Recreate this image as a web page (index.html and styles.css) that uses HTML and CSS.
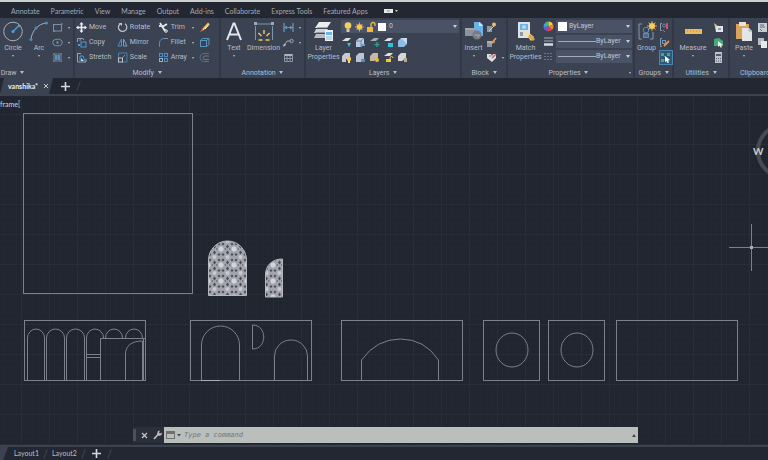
FILE: index.html
```html
<!DOCTYPE html>
<html lang="en">
<head>
<meta charset="UTF-8">
<meta name="viewport" content="width=device-width, initial-scale=1.0">
<title>vanshika - drawing</title>
<link rel="stylesheet" href="styles.css">
</head>
<body>

<nav class="menu">
    <a href="#">Annotate</a>
    <a href="#">Parametric</a>
    <a href="#">View</a>
    <a href="#">Manage</a>
    <a href="#">Output</a>
    <a href="#">Add-ins</a>
    <a href="#">Collaborate</a>
    <a href="#">Express Tools</a>
    <a href="#">Featured Apps</a>
    <button class="menu-toggle" aria-label="Ribbon display"><svg width="16" height="6" viewBox="0 0 16 6"><rect x="1" y="1" width="9" height="4" fill="#e4e6e8"/><path d="M4 3h3" stroke="#8a9099"/><path d="M12 2h3l-1.500 2z" fill="#c5c9d0"/></svg></button>
</nav>

<div class="ribbon">

    <!-- Draw -->
    <section class="panel draw">
        <div class="panel-body">
            <button class="big"><svg width="20" height="21" viewBox="0 0 20 21" fill="none"><circle cx="10" cy="10.500" r="9.300" stroke="#a7adb8"/><path d="M10 10.500l5-5" stroke="#4ba3e0" stroke-width="1.300"/><circle cx="10" cy="10.500" r="1.500" fill="#4ba3e0"/><circle cx="16" cy="5" r="1.300" fill="#4ba3e0"/></svg><span>Circle</span><i class="arrow"></i></button>
            <button class="big"><svg width="20" height="21" viewBox="0 0 20 21" fill="none"><path d="M2 18C3 10 9 3 17 2" stroke="#a7adb8"/><g fill="#4b8fc4"><circle cx="2" cy="18.500" r="1.500"/><circle cx="7" cy="7" r="1.500"/><circle cx="17.500" cy="2" r="1.500"/></g></svg><span>Arc</span><i class="arrow"></i></button>
            <div class="stack">
                <button class="tool" aria-label="Rectangle"><svg width="11" height="11" viewBox="0 0 11 11" fill="none"><rect x="1.500" y="2.500" width="8" height="6.500" stroke="#8790a0"/><path d="M1 9h2M9 2h1.500" stroke="#4b8fc4" stroke-width="2"/></svg><i class="arrow"></i></button>
                <button class="tool" aria-label="Ellipse"><svg width="11" height="11" viewBox="0 0 11 11" fill="none"><ellipse cx="5.500" cy="5.500" rx="4.700" ry="3.300" stroke="#8790a0"/><circle cx="5.500" cy="5.500" r="1.300" fill="#4b8fc4"/></svg><i class="arrow"></i></button>
                <button class="tool" aria-label="Hatch"><svg width="11" height="11" viewBox="0 0 11 11" fill="none"><path d="M2 1v9M9 1v9M1 2h9M1 9h9" stroke="#75839a"/><rect x="3" y="3" width="5" height="5" fill="#3f7aa8"/><path d="M4 3v5M7 3v5" stroke="#65a8d8"/></svg><i class="arrow"></i></button>
            </div>
        </div>
        <h2 class="panel-title">Draw <i class="arrow down"></i></h2>
    </section>

    <!-- Modify -->
    <section class="panel modify">
        <div class="panel-body">
            <div class="stack wide">
                <button class="tool"><svg width="11" height="11" viewBox="0 0 11 11"><path d="M5.500 1v9M1 5.500h9" stroke="#e8eaee" stroke-width="1.600"/><path d="M5.500 0l2 2.500h-4zM5.500 11l2-2.500h-4zM0 5.500l2.500-2v4zM11 5.500l-2.500-2v4z" fill="#e8eaee"/></svg>Move</button>
                <button class="tool"><svg width="11" height="11" viewBox="0 0 11 11" fill="none"><path d="M1.500 5V1.500H6M8 3a2 2 0 1 0-4 1" stroke="#8fa1b5"/><rect x="5" y="5" width="5" height="5" stroke="#4b9bd4"/><path d="M2 8h2" stroke="#4b9bd4" stroke-width="2"/></svg>Copy</button>
                <button class="tool"><svg width="11" height="11" viewBox="0 0 11 11" fill="none"><path d="M1.500 1v9H10V7M1.500 1.500H5" stroke="#97a3b4"/><path d="M4 9V4h3l2 5" stroke="#4b9bd4"/><path d="M5 6l3 3H5z" fill="#d5d9df"/></svg>Stretch</button>
            </div>
            <div class="stack wide">
                <button class="tool"><svg width="11" height="11" viewBox="0 0 11 11" fill="none"><path d="M8 1.800A4.200 4.200 0 1 1 3 2" stroke="#c3c8d0" stroke-width="1.200"/><path d="M1.500 1h3.500v3z" fill="#c3c8d0"/></svg>Rotate</button>
                <button class="tool"><svg width="11" height="11" viewBox="0 0 11 11" fill="none"><path d="M4.500 2v7H1z" stroke="#4b8fc4"/><path d="M6.500 2v7H10z" stroke="#6fa0c8"/></svg>Mirror</button>
                <button class="tool"><svg width="11" height="11" viewBox="0 0 11 11" fill="none"><path d="M1.500 5V1h8.500v9H6" stroke="#4b7ea8"/><rect x="1.500" y="6" width="4" height="4" stroke="#c3c8d0"/><path d="M6 5l2-2" stroke="#4b9bd4"/></svg>Scale</button>
            </div>
            <div class="stack wide">
                <button class="tool"><svg width="11" height="11" viewBox="0 0 11 11" fill="none"><path d="M2 1l5 8M9 2L4 5" stroke="#e8eaee" stroke-width="1.800"/><circle cx="8" cy="9" r="1.300" stroke="#e8eaee"/><path d="M1 4h3" stroke="#d9dce0" stroke-width="2"/></svg>Trim<i class="arrow"></i></button>
                <button class="tool"><svg width="11" height="11" viewBox="0 0 11 11" fill="none"><path d="M1.500 10V6c0-3 2-4.500 5-4.500" stroke="#4b8fc4"/><path d="M6 1.500h4" stroke="#8790a0"/></svg>Fillet<i class="arrow"></i></button>
                <button class="tool"><svg width="11" height="11" viewBox="0 0 11 11" fill="none"><g stroke="#4b8fc4"><rect x="1.500" y="1.500" width="3" height="3"/><rect x="6.500" y="1.500" width="3" height="3"/><rect x="6.500" y="6.500" width="3" height="3"/></g><rect x="1.500" y="6.500" width="3" height="3" stroke="#a7adb8"/></svg>Array<i class="arrow"></i></button>
            </div>
            <div class="stack">
                <button class="tool" aria-label="Erase"><svg width="11" height="11" viewBox="0 0 11 11"><path d="M3 7l6-6.500 1.500 1.500-6 6.500z" fill="#f2c14e"/><path d="M1 10l2-3 1.500 1.500z" fill="#e8604c"/><path d="M6 7l4-4.500" stroke="#fff"/></svg></button>
                <button class="tool" aria-label="Explode"><svg width="11" height="11" viewBox="0 0 11 11" fill="none" stroke="#5b93be"><rect x="1.500" y="3.500" width="6" height="6"/><path d="M1.500 3.500l2-2h6.500v6l-2.500 2M7.500 3.500L10 1.500"/></svg></button>
                <button class="tool" aria-label="Offset"><svg width="11" height="11" viewBox="0 0 11 11" fill="none"><path d="M10 1.500H5a4 4 0 0 0 0 8h5" stroke="#4a7495"/><path d="M10 4H6a1.500 1.500 0 0 0 0 3.500h4" stroke="#717b8d"/></svg></button>
            </div>
        </div>
        <h2 class="panel-title">Modify <i class="arrow down"></i></h2>
    </section>

    <!-- Annotation -->
    <section class="panel annotation">
        <div class="panel-body">
            <button class="big"><svg width="20" height="21" viewBox="0 0 20 21" fill="none"><path d="M3 19L9.500 2.500h1L17 19M5.500 13.500h9" stroke="#e4e6ea" stroke-width="2"/></svg><span>Text</span><i class="arrow"></i></button>
            <button class="big dim"><svg width="20" height="21" viewBox="0 0 20 21" fill="none"><path d="M1.500 5v14M18.500 5v14M1 3h18" stroke="#7e96b0"/><path d="M0 1h3v3H0zM17 1h3v3h-3z" fill="#9da8b7"/><path d="M4.500 19h4M11.500 19h4M4.500 12l3 3M15.500 12l-3 3M10 9v4" stroke="#f0c65a" stroke-width="1.500"/></svg><span>Dimension</span></button>
            <div class="stack">
                <button class="tool" aria-label="Linear"><svg width="11" height="11" viewBox="0 0 11 11"><path d="M1 1v9M10 1v9" stroke="#9aa3b1"/><path d="M1 5.500h9" stroke="#4b9bd4"/><path d="M1 5.500l3-2v4zM10 5.500l-3-2v4z" fill="#4b9bd4"/></svg><i class="arrow"></i></button>
                <button class="tool" aria-label="Leader"><svg width="11" height="11" viewBox="0 0 11 11" fill="none"><path d="M1 9l3-5h4" stroke="#9aa3b1"/><circle cx="8.500" cy="4" r="1.700" stroke="#9aa3b1"/><path d="M0 10l1-3.500 2 1.500z" fill="#c3c8d0"/></svg><i class="arrow"></i></button>
                <button class="tool" aria-label="Table"><svg width="11" height="11" viewBox="0 0 11 11" fill="none"><path d="M1 2h9v2H1z" fill="#aeb4be"/><path d="M1.500 2v7.500h8V2M1 6.500h9M4 4v5M7 4v5" stroke="#8b94a2"/></svg></button>
            </div>
        </div>
        <h2 class="panel-title">Annotation <i class="arrow down"></i></h2>
    </section>

    <!-- Layers -->
    <section class="panel layers">
        <div class="panel-body">
            <button class="big"><svg width="20" height="21" viewBox="0 0 20 21"><path d="M5 1h12l-4 6H1z" fill="#eceded"/><path d="M2 8h12l-2 4H0z" fill="#d0d2d4"/><path d="M2 13h10l-1 4H0z" fill="#b8bbbf"/><path d="M3 7h10M2 12h10" stroke="#596171"/><path d="M11 9h8v11h-8z" fill="#eef1f3"/><path d="M12 11h6v3h-6z" fill="#69b7ea"/><path d="M12 16h6M12 18h6" stroke="#8bbbdc"/></svg><span>Layer</span><span>Properties</span></button>
            <div class="layer-tools">
                <div class="combo">
                    <svg width="44" height="12" viewBox="0 0 44 12"><circle cx="5" cy="4.500" r="3.300" fill="#f7cf58"/><path d="M3.500 7.500h3V11h-3z" fill="#d8c9a0"/><circle cx="16.500" cy="6" r="2.800" fill="#f7c94a"/><path d="M16.500 1.500v9M12 6h9M13.500 3l6 6M19.500 3l-6 6" stroke="#f7c94a" stroke-width=".8"/><path d="M24 6h6v5h-6z" fill="#f2b93c"/><path d="M28 6V3.500a2 2 0 0 1 4 0V5" fill="none" stroke="#f2b93c" stroke-width="1.300"/><path d="M35 2h8v8h-8z" fill="#fff"/></svg>
                    <select aria-label="Layer"><option>0</option></select>
                </div>
                <div class="icon-row">
                    <button class="tool" aria-label="Off"><svg width="11" height="11" viewBox="0 0 11 11"><path d="M1 4l4-3h5L7 4z" fill="#dfe2e5"/><path d="M6 6h4L8 10z" fill="#2cc4d4"/></svg></button>
                    <button class="tool" aria-label="Isolate"><svg width="11" height="11" viewBox="0 0 11 11"><path d="M1 4l3-3h5v7l-3 2H1z" fill="#b9cbdc"/><path d="M1 4h5v6M6 4l3-3" fill="none" stroke="#6a86a4"/><path d="M6 7h4v2H6z" fill="#5ca4dc"/></svg></button>
                    <button class="tool" aria-label="Freeze"><svg width="11" height="11" viewBox="0 0 11 11"><path d="M1 4l4-3h5L7 4z" fill="#a6adb6"/><path d="M8 5v5M5.500 7.500h5" stroke="#2a9c98" stroke-width="1.500"/></svg></button>
                    <button class="tool" aria-label="Lock"><svg width="11" height="11" viewBox="0 0 11 11"><path d="M1 4l4-3h5L7 4z" fill="#dfe2e5"/><path d="M5 6h5v4H5z" fill="#2cc4d4"/></svg></button>
                    <button class="tool" aria-label="Make current"><svg width="11" height="11" viewBox="0 0 11 11"><path d="M1 4l3-3h6v6l-3 3H1z" fill="#8ebce4"/><path d="M4 1h6v6" fill="#c5dcef"/></svg></button>
                </div>
                <div class="icon-row">
                    <button class="tool" aria-label="Turn on"><svg width="11" height="11" viewBox="0 0 11 11"><path d="M1 4l3-3h5v6H5v3H1z" fill="#c7cbd1"/><circle cx="8" cy="7" r="2.200" fill="#f7c94a"/><path d="M7 9h2v2H7z" fill="#e8d9a8"/></svg></button>
                    <button class="tool" aria-label="Unisolate"><svg width="11" height="11" viewBox="0 0 11 11"><path d="M1 4l3-3h5v6l-3 3H1z" fill="#b9c5d2"/><path d="M6 7h4v3H7z" fill="#4f88bd"/></svg></button>
                    <button class="tool" aria-label="Thaw"><svg width="11" height="11" viewBox="0 0 11 11"><path d="M1 4l3-3h5v5L5 9H1z" fill="#c4b8a6"/><circle cx="8" cy="8" r="2" fill="#f7b93a"/></svg></button>
                    <button class="tool" aria-label="Unlock"><svg width="11" height="11" viewBox="0 0 11 11"><path d="M1 4l4-3h5L7 4z" fill="#dfe2e5"/><path d="M3 7h5v3H3z" fill="#f2c83c"/><path d="M7 7V6a1.500 1.500 0 0 1 3 0" fill="none" stroke="#f2c83c"/></svg></button>
                    <button class="tool" aria-label="Match layer"><svg width="11" height="11" viewBox="0 0 11 11"><path d="M1 4l3-3h5v5L5 9H1z" fill="#d5d7da"/><path d="M7 6h3v4H7z" fill="#b9a98a"/></svg></button>
                </div>
            </div>
        </div>
        <h2 class="panel-title">Layers <i class="arrow down"></i></h2>
    </section>

    <!-- Block -->
    <section class="panel block">
        <div class="panel-body">
            <button class="big"><svg width="20" height="21" viewBox="0 0 20 21"><path d="M10 1h6l3 3v11h-9z" fill="#6ab2ea"/><path d="M15 1l4 4h-4z" fill="#d4e8f7"/><path d="M1 7h11v8H1z" fill="#8d939d"/><path d="M1 8h11" stroke="#b3b8bf"/><circle cx="13" cy="14" r="4.500" fill="#757c88"/><path d="M10.500 14h5l-2 2.500" stroke="#aab0b9" fill="none"/></svg><span>Insert</span><i class="arrow"></i></button>
            <div class="stack">
                <button class="tool" aria-label="Create block"><svg width="11" height="11" viewBox="0 0 11 11"><path d="M1 4h5v6H1z" fill="#8d95a2"/><path d="M3 9l5-5" stroke="#cdd1d6"/><circle cx="8" cy="2.500" r="2" fill="#f0c060"/></svg></button>
                <button class="tool" aria-label="Edit block"><svg width="11" height="11" viewBox="0 0 11 11"><path d="M1 4h5v6H1z" fill="#8d95a2"/><path d="M1 5h8" stroke="#cdd1d6"/><path d="M5 7l5-6" stroke="#ef9a54" stroke-width="1.800"/></svg></button>
                <button class="tool" aria-label="Edit attributes"><svg width="11" height="11" viewBox="0 0 11 11"><path d="M1 2h4l1 2 1-2h3v4L6 10 1 6z" fill="#dddfe2"/><path d="M6 6l4-4" stroke="#d3604f" stroke-width="1.500"/><path d="M3 4h2" stroke="#70798a"/></svg><i class="arrow"></i></button>
            </div>
        </div>
        <h2 class="panel-title">Block <i class="arrow down"></i></h2>
    </section>

    <!-- Properties -->
    <section class="panel properties">
        <div class="panel-body">
            <button class="big"><svg width="20" height="21" viewBox="0 0 20 21"><path d="M2 1h12v16H2z" fill="#dfe2e5"/><path d="M4 3h8v6H4z" fill="#6cb4e8"/><circle cx="8" cy="6" r="2" fill="#b9d8ef"/><path d="M4 11h3v4H4z" fill="#8e98a8"/><path d="M8 11l3-1 7 6-3 4z" fill="#f0dfb2"/><path d="M14 13l5 5-2 2-5-4z" fill="#dca648"/></svg><span>Match</span><span>Properties</span></button>
            <div class="prop-rows">
                <div class="prop-row">
                    <svg width="11" height="11" viewBox="0 0 11 11"><path d="M5.500 5.500V.5a5 5 0 0 1 4.500 3z" fill="#f5d33d"/><path d="M5.500 5.500L10 3.500a5 5 0 0 1-1 5.500z" fill="#ee7f35"/><path d="M5.500 5.500L9 9a5 5 0 0 1-5 1z" fill="#dd4058"/><path d="M5.500 5.500L4 10.200A5 5 0 0 1 .5 6z" fill="#7a56c8"/><path d="M5.500 5.500L.5 6A5 5 0 0 1 2.500 1.500z" fill="#3fa5e0"/><path d="M5.500 5.500l-3-4a5 5 0 0 1 3-1z" fill="#5cc06a"/></svg>
                    <div class="combo"><span class="swatch"></span><select aria-label="Object color"><option>ByLayer</option></select></div>
                </div>
                <div class="prop-row">
                    <svg width="11" height="11" viewBox="0 0 11 11"><path d="M1 2h9M1 5h9" stroke="#a9afb9"/><path d="M1 8.500h9" stroke="#d9dce0" stroke-width="2.500"/></svg>
                    <div class="combo"><span class="line"></span><select aria-label="Lineweight"><option>ByLayer</option></select></div>
                </div>
                <div class="prop-row">
                    <svg width="11" height="11" viewBox="0 0 11 11"><path d="M1 2.500h9M1 5.500h9M1 8.500h9" stroke="#6a7485" stroke-dasharray="2 1"/></svg>
                    <div class="combo"><span class="line"></span><select aria-label="Linetype"><option>ByLayer</option></select></div>
                </div>
            </div>
        </div>
        <h2 class="panel-title with-launcher"><span>Properties <i class="arrow down"></i></span><i class="arrow launcher"></i></h2>
    </section>

    <!-- Groups -->
    <section class="panel groups">
        <div class="panel-body">
            <button class="big"><svg width="20" height="21" viewBox="0 0 20 21" fill="none"><path d="M5 3H2v15h3M13 18h3v-7" stroke="#8e98a8"/><circle cx="9" cy="9" r="2.800" stroke="#5d8cb8"/><rect x="6.500" y="12.500" width="5" height="4" fill="#52698a" stroke="#5d8cb8"/><circle cx="15" cy="5" r="3" fill="#f8cc5a"/><path d="M15 0v10M10 5h10M11.500 1.500l7 7M18.500 1.500l-7 7" stroke="#f8cc5a" stroke-width=".8"/></svg><span>Group</span></button>
            <div class="stack">
                <button class="tool" aria-label="Ungroup"><svg width="11" height="11" viewBox="0 0 11 11" fill="none"><path d="M3 1.500H1.500v7H3" stroke="#8e98a8"/><circle cx="5" cy="3.500" r="1.500" stroke="#5d8cb8"/><path d="M8 1v6" stroke="#d3525c" stroke-width="2"/><path d="M4 8l2 2" stroke="#5d8cb8"/></svg></button>
                <button class="tool" aria-label="Group edit"><svg width="11" height="11" viewBox="0 0 11 11" fill="none"><path d="M3 1.500H1.500v8H3" stroke="#8e98a8"/><rect x="3.500" y="3.500" width="3" height="3" stroke="#5b9bd6"/><path d="M5 9l5-5" stroke="#e29355" stroke-width="1.800"/></svg></button>
                <button class="tool selected" aria-label="Group selection on/off" aria-pressed="true"><svg width="11" height="11" viewBox="0 0 11 11"><path d="M1 1h3v3H1zM1 7h3v3H1zM7 1h3v3H7z" fill="#4ca58a"/><path d="M2 2l5 5" stroke="#4ca58a"/><path d="M5 4l5 4-2 .5 1 2-1.500.5-1-2L5 10z" fill="#fff"/></svg></button>
            </div>
        </div>
        <h2 class="panel-title">Groups <i class="arrow down"></i></h2>
    </section>

    <!-- Utilities -->
    <section class="panel utilities">
        <div class="panel-body">
            <button class="big"><svg width="20" height="21" viewBox="0 0 20 21"><path d="M2 8h17v5H2z" fill="#efbb5a"/><path d="M4 10h1M7 10h1M10 10h1M13 10h1M16 10h1" stroke="#c48a30"/></svg><span>Measure</span><i class="arrow"></i></button>
            <div class="stack">
                <button class="tool" aria-label="Select all"><svg width="11" height="11" viewBox="0 0 11 11"><path d="M2 4h8v6H3z" fill="#e3e5e7"/><path d="M1 1l4 3-3 1z" fill="#e8c067"/><path d="M5 6h3v2H5z" fill="#73a8c9"/></svg></button>
                <button class="tool" aria-label="Quick select"><svg width="11" height="11" viewBox="0 0 11 11"><path d="M1 2l5-1 4 3v5H1z" fill="#47aa72"/><path d="M5 4l5 4-2 .5 1 2H7.500l-1-2L5 10z" fill="#e8f5ee"/></svg></button>
                <button class="tool" aria-label="Calculator"><svg width="11" height="11" viewBox="0 0 11 11"><path d="M2 0h7v11H2z" fill="#bfc3c9"/><path d="M3 2h5v2H3z" fill="#525b69"/><path d="M3 6.500h5M3 9h5" stroke="#525b69" stroke-dasharray="1 1"/></svg></button>
            </div>
        </div>
        <h2 class="panel-title">Utilities <i class="arrow down"></i></h2>
    </section>

    <!-- Clipboard -->
    <section class="panel clipboard">
        <div class="panel-body">
            <button class="big"><svg width="20" height="21" viewBox="0 0 20 21"><path d="M2 3h13v15H2z" fill="#dba35d"/><path d="M5 1h7v4H5z" fill="#e8e3da"/><path d="M8 7h7l3 3v10H8z" fill="#e4e5e7"/><path d="M15 7v3h3" fill="none" stroke="#a2a7af"/></svg><span>Paste</span><i class="arrow"></i></button>
            <div class="stack">
                <button class="tool" aria-label="Cut"><svg width="11" height="11" viewBox="0 0 11 11"><path d="M1 1h9v9H1z" fill="#c9ccd1"/><path d="M3 3h4M3 5h5M3 7l2 2" stroke="#636c7b"/></svg></button>
                <button class="tool" aria-label="Copy clip"><svg width="11" height="11" viewBox="0 0 11 11"><path d="M1 1h6v7H1z" fill="#b7bbc2"/><path d="M4 4h6v7H4z" fill="#e7e8ea"/></svg></button>
            </div>
        </div>
        <h2 class="panel-title">Clipboard</h2>
    </section>
</div>

<div class="file-tabs">
    <div class="file-tab"><a href="#">vanshika*</a><button aria-label="Close tab"><svg width="6" height="6" viewBox="0 0 6 6"><path d="M1 1l4 4M5 1L1 5" stroke="#c5c9d0"/></svg></button></div>
    <button class="add" aria-label="New tab"><svg width="9" height="9" viewBox="0 0 9 9"><path d="M4.500 0v9M0 4.500h9" stroke="#d5d8dd" stroke-width="1.600"/></svg></button>
    <span class="slash"></span>
</div>

<main class="canvas">
    <svg class="drawing" width="100%" height="100%">
        <defs>
            <pattern id="grid" width="28" height="30" patternUnits="userSpaceOnUse" x="21" y="18">
                <path d="M5.500 0v30M11.500 0v30M17.500 0v30M23.500 0v30M0 6.500h28M0 12.500h28M0 18.500h28M0 24.500h28" stroke="#222831"/>
                <path d="M.5 0v30M0 .5h28" stroke="#282e38"/>
            </pattern>
            <!-- jali tile, repeated over the window shapes -->
            <pattern id="jali" width="13" height="16" patternUnits="userSpaceOnUse" x="208" y="145">
                <path d="M0 0h13v16H0z" fill="#a2a5ad"/>
                <circle cx="0" cy="8" r="2.500" fill="#d3d5da"/>
                <circle cx="13" cy="8" r="2.500" fill="#d3d5da"/>
                <circle cx="6.500" cy="0" r="2" fill="#c8cacf"/>
                <circle cx="6.500" cy="16" r="2" fill="#c8cacf"/>
                <path d="M6.500 3.500l1.500 2-1.500 2-1.500-2zM6.500 9.500l1.500 2-1.500 2-1.500-2zM2 1.500l1.500 1.500-1.500 1.500L.5 3zM11 1.500l1.500 1.500-1.500 1.500L9.500 3zM2 12l1.500 1.500L2 15 .5 13.500zM11 12l1.500 1.500L11 15l-1.500-1.500z" fill="#484d57"/>
                <path d="M3 8l2-1v2zM10 8L8 7v2z" fill="#676b75"/>
            </pattern>
        </defs>
        <rect width="100%" height="100%" fill="url(#grid)"/>
        <rect class="outline" x="23.500" y="17.500" width="169" height="180"/>

        <g class="window">
            <path d="M208.500 199.500V164a19 19 0 0 1 38 0v35.500z"/>
            <path d="M265.500 201V179c0-10 7-16 17-16v38z"/>
        </g>

        <!-- arcade wall -->
        <g class="outline">
            <rect x="24.500" y="224.500" width="121" height="60"/>
            <path d="M27.500 284V242a8.500 9 0 0 1 17 0v42M46.500 284V242a9 9 0 0 1 18 0v42M66.500 284V242a9 9 0 0 1 18 0v42M86.500 284V242a8.500 9 0 0 1 17 0M105.500 242a8.500 9 0 0 1 17 0M125.500 242a8.500 9 0 0 1 17 0M143.500 242v42"/>
            <path d="M100.500 284V242.500h44.500M86 258.500h14M86 261.500h14M125.500 284V258c0-8 6-13 17-13v39"/>
        </g>

        <!-- entrance wall -->
        <g class="outline">
            <rect x="190.500" y="224.500" width="121" height="60"/>
            <path d="M201.500 284V249a19 19 0 0 1 38 0v35M252.500 229v24c15 0 15-24 0-24M274.500 284V260a16.500 16 0 0 1 33 0v24"/>
            <path d="M201 284.500h19" class="bright"/>
        </g>

        <g class="outline">
            <rect x="341.500" y="224.500" width="121" height="60"/>
            <path d="M361.500 284V264q15-21 39-21t38 21v20"/>
            <rect x="483.500" y="224.500" width="56" height="60"/>
            <ellipse cx="512" cy="254" rx="16" ry="17"/>
            <rect x="548.500" y="224.500" width="56" height="60"/>
            <ellipse cx="577" cy="254" rx="16" ry="17"/>
            <rect x="616.500" y="224.500" width="121" height="60"/>
        </g>

        <path d="M751.500 128v47M729 151.500h39" class="outline"/>
        <rect x="750" y="150" width="3" height="3" fill="#a9adb4"/>
    </svg>
    <span class="view-label">frame[</span>
    <div class="compass"><span>W</span></div>

    <div class="command">
        <span class="grip"></span>
        <button aria-label="Close"><svg width="7" height="7" viewBox="0 0 7 7"><path d="M1 1l5 5M6 1L1 6" stroke="#c5c9d0" stroke-width="1.200"/></svg></button>
        <button aria-label="Customize"><svg width="9" height="10" viewBox="0 0 9 10"><path d="M1 9l4.500-5" stroke="#b9bdc4" stroke-width="1.700"/><path d="M4 4l1-3 2-.5-1 2 1 1 2-1-.5 2.500L6 6z" fill="#b9bdc4"/></svg></button>
        <div class="command-box">
            <svg width="15" height="9" viewBox="0 0 15 9"><rect x=".5" y=".5" width="8" height="7" fill="none" stroke="#6c7270"/><path d="M0 1h9v2H0z" fill="#6c7270"/><path d="M11 3h4l-2 2.500z" fill="#444a4a"/></svg>
            <input type="text" aria-label="Command" placeholder="Type a command">
            <i class="arrow up"></i>
        </div>
    </div>
</main>

<footer class="layout-tabs">
    <span class="model"></span>
    <a href="#">Layout1</a>
    <span class="slash"></span>
    <a href="#">Layout2</a>
    <span class="slash"></span>
    <button class="add" aria-label="New layout"><svg width="9" height="9" viewBox="0 0 9 9"><path d="M4.500 0v9M0 4.500h9" stroke="#d5d8dd" stroke-width="1.600"/></svg></button>
    <span class="slash"></span>
</footer>

</body>
</html>
```
FILE: styles.css
```css
* {
    box-sizing: border-box;
}
body {
    margin: 0;
    height: 100vh;
    display: flex;
    flex-direction: column;
    overflow: hidden;
    background-color: #222731;
    color: #b9bec8;
    font-family: Lato, "Open Sans", sans-serif;
    font-size: 7px;
    line-height: 9px;
    border-top: 2px solid #ccd1d0;
}
a {
    color: inherit;
    text-decoration: none;
}
button {
    padding: 0;
    border: none;
    background: none;
    color: inherit;
    font: inherit;
    cursor: pointer;
}
svg {
    display: block;
    flex: none;
}

/* menu */
.menu {
    display: flex;
    align-items: center;
    gap: 11px;
    height: 16px;
    padding: 2px 11px 0;
    color: #a4a9b3;
    white-space: nowrap;
}
.menu-toggle {
    margin-left: 4px;
}

/* small triangles */
.arrow {
    display: inline-block;
    flex: none;
    width: 0;
    height: 0;
    border: 1px solid transparent;
    border-top: 2px solid #b9bec8;
    border-bottom: none;
}
.arrow.down {
    border-width: 3px 2px 0;
    margin-left: 2px;
    vertical-align: 1px;
}
.arrow.up {
    border-width: 0 2px 3px;
    border-bottom: 3px solid #444a4a;
}

/* ribbon */
.ribbon {
    display: flex;
    flex: none;
    height: 60px;
    background-color: #3b4252;
    overflow: hidden;
    font-family: Roboto, "Open Sans", sans-serif;
}
.panel {
    flex: none;
    display: flex;
    flex-direction: column;
    border-right: 2px solid #323846;
}
.panel-body {
    display: flex;
    flex: none;
    height: 48px;
    padding: 2px 1px 0;
}
.panel-title {
    margin: 0;
    padding-top: 1px;
    font-size: 7px;
    font-weight: normal;
    line-height: 12px;
    text-align: center;
    white-space: nowrap;
}
.with-launcher {
    display: flex;
    align-items: center;
    padding-right: 2px;
}
.with-launcher span {
    flex: 1;
}
.draw {
    width: 123px;
    margin-left: -48px;
}
.draw .panel-body {
    justify-content: flex-end;
}
.modify {
    width: 146px;
}
.annotation {
    width: 85px;
}
.layers {
    width: 156px;
}
.block {
    width: 46px;
}
.properties {
    width: 127px;
}
.groups {
    width: 39px;
}
.utilities {
    width: 56px;
}
.clipboard {
    width: 50px;
    border-right: none;
}
.big {
    display: flex;
    flex-direction: column;
    align-items: center;
    flex: none;
    width: 26px;
    padding-top: 1px;
    line-height: 9px;
}
.big svg {
    margin-bottom: 2px;
}
.big span {
    white-space: nowrap;
}
.big .arrow {
    margin-top: 2px;
}
.annotation .big {
    width: 24px;
}
.annotation .big.dim {
    width: 35px;
}
.layers .big,
.properties .big {
    width: 33px;
}
.block .big,
.groups .big {
    width: 21px;
}
.utilities .big {
    width: 36px;
}
.stack {
    display: flex;
    flex-direction: column;
    width: 20px;
}
.stack.wide {
    width: 42px;
}
.annotation .stack,
.utilities .stack,
.groups .stack,
.block .stack {
    margin-left: 2px;
}
.tool {
    display: flex;
    align-items: center;
    gap: 2px;
    height: 15px;
    white-space: nowrap;
}
.tool .arrow {
    margin-left: 3px;
}
.wide .arrow {
    margin-left: auto;
    margin-right: 5px;
}
.tool.selected {
    width: 14px;
    padding-left: 1px;
    background-color: #2f5878;
    outline: 1px solid #4b87b5;
    outline-offset: -1px;
}

/* drop-downs */
.combo {
    position: relative;
    display: flex;
    align-items: center;
    flex: 1;
    height: 13px;
    padding-left: 2px;
    background-color: #4a5366;
}
.combo::after {
    content: "";
    position: absolute;
    right: 2px;
    top: 5px;
    border: 2px solid transparent;
    border-top: 3px solid #c9cdd4;
    border-bottom: none;
    pointer-events: none;
}
.combo select {
    flex: 1;
    min-width: 0;
    height: 13px;
    padding: 0 0 0 2px;
    border: none;
    background: none;
    color: #c0c5ce;
    font: inherit;
    appearance: none;
}
.swatch {
    width: 9px;
    height: 9px;
    background-color: #fff;
}
.line {
    width: 38px;
    height: 1px;
    background-color: #a5abb6;
}
.combo .line + select {
    padding-left: 0;
}
.layer-tools {
    flex: 1;
    padding-left: 1px;
}
.layer-tools .combo {
    margin-bottom: 2px;
}
.icon-row {
    display: flex;
    gap: 3px;
}
.prop-rows {
    flex: 1;
    display: flex;
    flex-direction: column;
    gap: 2px;
    padding-left: 1px;
}
.prop-row {
    display: flex;
    align-items: center;
    gap: 2px;
}

/* drawing tabs */
.file-tabs {
    display: flex;
    align-items: center;
    flex: none;
    height: 18px;
    gap: 8px;
    border-bottom: 2px solid #3b4250;
}
.file-tab {
    display: flex;
    align-items: center;
    gap: 5px;
    height: 16px;
    padding: 0 4px 0 8px;
    background-color: #3b4252;
    color: #eceef1;
    font-weight: bold;
    clip-path: polygon(4px 0, 100% 0, calc(100% - 4px) 100%, 0 100%);
}
.slash {
    width: 1px;
    height: 10px;
    background-color: #3f4653;
    transform: rotate(20deg);
}

/* drawing area */
.canvas {
    position: relative;
    flex: 1;
    min-height: 0;
    overflow: hidden;
    background-color: #20252f;
}
.drawing {
    position: absolute;
    inset: 0;
}
.outline {
    fill: none;
    stroke: #7b8089;
}
.bright {
    stroke: #a9adb4;
}
.window path {
    fill: url(#jali);
    stroke: #b4b7bd;
}
.view-label {
    position: absolute;
    left: 0;
    top: 4px;
    color: #d5d8dd;
}
.compass {
    position: absolute;
    right: -44px;
    top: 27px;
    width: 56px;
    height: 56px;
    border: 4px solid #454a54;
    border-radius: 50%;
}
.compass span {
    position: absolute;
    left: -7px;
    top: 17px;
    color: #c9ccd2;
    font-size: 10px;
    font-weight: bold;
    line-height: 14px;
}

/* command line */
.command {
    position: absolute;
    left: 133px;
    right: 130px;
    bottom: 2px;
    display: flex;
    align-items: center;
    gap: 5px;
    height: 16px;
    background-color: #2a2f39;
}
.grip {
    width: 3px;
    height: 12px;
    background-color: #4a505c;
}
.command-box {
    display: flex;
    align-items: center;
    flex: 1;
    gap: 3px;
    height: 16px;
    margin-left: -3px;
    padding: 0 2px;
    background-color: #bbbfbc;
}
.command-box input {
    flex: 1;
    min-width: 0;
    padding: 0;
    border: none;
    outline: none;
    background: none;
    color: #333;
    font: italic 7px/12px "DejaVu Sans Mono", monospace;
}
.command-box input::placeholder {
    color: #6f7573;
    opacity: 1;
}

/* layout tabs */
.layout-tabs {
    display: flex;
    align-items: center;
    flex: none;
    gap: 6px;
    height: 15px;
    border-top: 2px solid #3b4250;
}
.model {
    width: 8px;
    height: 13px;
    background-color: #3b4252;
    clip-path: polygon(0 0, 100% 0, 40% 100%, 0 100%);
}
.layout-tabs .add {
    margin: 0 2px;
}
```
